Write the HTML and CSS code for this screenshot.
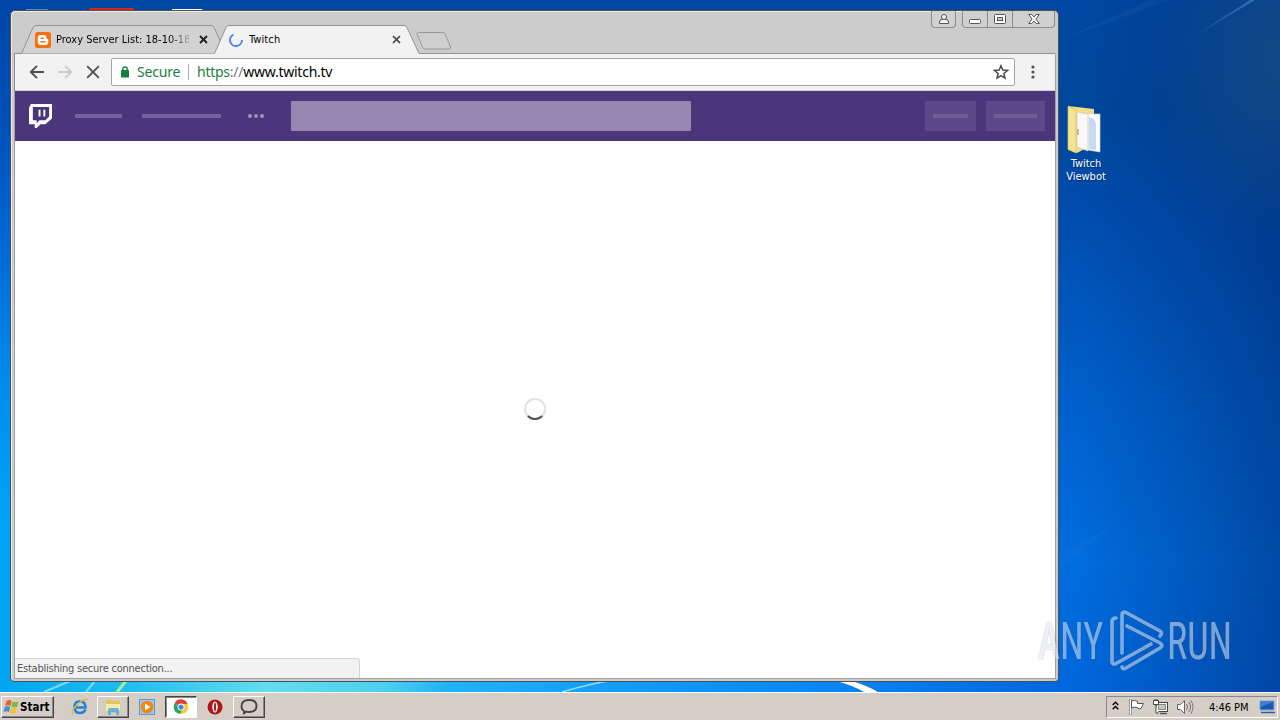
FILE: index.html
```html
<!DOCTYPE html>
<html lang="en">
<head>
  <meta charset="UTF-8">
  <meta name="viewport" content="width=device-width, initial-scale=1.0">
  <title>Desktop</title>
  <link rel="stylesheet" href="styles.css">
</head>
<body>
  <div class="desktop">
    <!-- wallpaper -->
    <svg class="wallpaper" width="1280" height="692" viewBox="0 0 1280 692">
      <defs>
        <linearGradient id="ray" x1="0" y1="1" x2="1" y2="0">
          <stop offset="0" stop-color="#4f9be0" stop-opacity="0"/>
          <stop offset="1" stop-color="#4f9be0" stop-opacity=".5"/>
        </linearGradient>
        <linearGradient id="side" x1="0" y1="0" x2="0" y2="1">
          <stop offset="0" stop-color="#0045a6"/>
          <stop offset=".18" stop-color="#0050b8"/>
          <stop offset=".35" stop-color="#0068d4"/>
          <stop offset=".55" stop-color="#008cec"/>
          <stop offset=".75" stop-color="#00a3f8"/>
          <stop offset="1" stop-color="#00a5f2"/>
        </linearGradient>
        <linearGradient id="strip">
          <stop offset="0" stop-color="#00a5f2"/>
          <stop offset=".12" stop-color="#20bdf0"/>
          <stop offset=".25" stop-color="#63dced"/>
          <stop offset=".36" stop-color="#4fd0f0"/>
          <stop offset=".42" stop-color="#22b4f8"/>
          <stop offset=".55" stop-color="#169ffb"/>
          <stop offset=".75" stop-color="#088af5"/>
          <stop offset="1" stop-color="#0066dc"/>
        </linearGradient>
      </defs>
      <rect x="0" y="0" width="30" height="692" fill="url(#side)"/>
      <rect x="0" y="681" width="1060" height="11" fill="url(#strip)"/>
      <path d="M1180 45L1250 0h5z" fill="url(#ray)"/>
      <path d="M1060 40L1150 0h20z" fill="#4f9be0" opacity=".08"/>
      <path d="M1060 555L1120 520 1060 570z" fill="#4f9be0" opacity=".05"/>
      <path d="M44 692L70 681M86 692L95 681" stroke="#9be4f5" stroke-width="2" opacity=".8"/>
      <path d="M117 692L126 681" stroke="#a5f0a0" stroke-width="3"/>
      <path d="M562 692Q590 684 608 681" stroke="#8fdcff" stroke-width="1.500" fill="none"/>
      <path d="M836 681h16q16 5 26 11h-14q-12-7-28-11z" fill="#fff"/>
      <path d="M26 9h22v2H26z" fill="#7aa6d8" opacity=".7"/>
      <path d="M89 9q0-1 2-1h42q1 0 1 1v4H89z" fill="#d8281c"/>
      <path d="M172 9h30l2 3h-32z" fill="#fff"/>
    </svg>

    <div class="shortcut">
      <svg width="40" height="50" viewBox="0 0 40 50">
        <path d="M2 1L28 4v35L11 48 2 45z" fill="#f1df85"/>
        <path d="M22 9h12v38l-12-2z" fill="#fff" stroke="#d9dee4" stroke-width=".6"/>
        <path d="M23 12l5 2 2 4v27l-7-1z" fill="#c6dbf0"/>
        <path d="M11 7l11 2v37l-11-4z" fill="#f8f8f8" stroke="#c9c9c2" stroke-width=".7"/>
        <path d="M2 1l8 4v43l-8-4z" fill="#f4e596" stroke="#d5bd56" stroke-width=".7"/>
        <path d="M12 24v6" stroke="#8d8254"/>
      </svg>
      <span>Twitch<br>Viewbot</span>
    </div>

    <div class="window">
      <div class="titlebar">
        <div class="tabs">
          <div class="tab">
            <svg class="shape" width="206" height="29" viewBox="0 0 206 29">
              <path d="M.5 28.500L12 2.500q1-2 3-2H190q2 0 3 2L205 28.500" fill="#d2d2d2" stroke="#929292"/>
            </svg>
            <svg class="favicon" width="16" height="16" viewBox="0 0 16 16">
              <rect width="16" height="16" rx="2.500" fill="#f8700b"/>
              <path d="M6 3h2.500q3 0 3 3 0 1 1 1 .8 0 .8 1V10q0 3-3.300 3H6q-3.300 0-3.300-3V6Q2.700 3 6 3z" fill="#fff"/>
              <path d="M6 6.200h2.300M6 9.800h4" stroke="#f8700b" stroke-width="1.400" stroke-linecap="round"/>
            </svg>
            <span class="title faded">Proxy Server List: 18-10-18</span>
            <svg class="close" width="9" height="9" viewBox="0 0 9 9"><path d="M1 1l7 7M8 1L1 8" stroke="#222" stroke-width="1.900"/></svg>
          </div>
          <div class="tab active">
            <svg class="shape" width="206" height="29" viewBox="0 0 206 29">
              <path d="M.5 28.500L12 2.500q1-2 3-2H190q2 0 3 2L205 28.500V29H.500z" fill="#f2f2f2"/>
              <path d="M.5 28.500L12 2.500q1-2 3-2H190q2 0 3 2L205 28.500" fill="none" stroke="#929292"/>
            </svg>
            <svg class="favicon" width="16" height="16" viewBox="0 0 16 16">
              <path d="M5.500 2.600A6 6 0 1 0 14 8" fill="none" stroke="#5484e8" stroke-width="2"/>
            </svg>
            <span class="title">Twitch</span>
            <svg class="close" width="9" height="9" viewBox="0 0 9 9"><path d="M1 1l7 7M8 1L1 8" stroke="#444" stroke-width="1.700"/></svg>
          </div>
          <svg class="newtab" width="36" height="18" viewBox="0 0 36 18">
            <path d="M2.500.5H27q1.500 0 2.200 1.500l5.300 13q.5 2-1.500 2H9q-1.500 0-2.200-1.500L1 2.500Q.5.500 2.500.5z" fill="#cfcfcf" stroke="#989898"/>
          </svg>
        </div>
        <div class="controls">
          <span class="ctl user">
            <svg width="12" height="12" viewBox="0 0 12 12" fill="#f4f4f4" stroke="#555"><path d="M1.500 10.500V9q0-2.500 2.500-2.500h4q2.500 0 2.500 2.500v1.500z"/><circle cx="6" cy="4" r="2.500"/></svg>
          </span>
          <span class="ctl min">
            <svg width="14" height="14" viewBox="0 0 14 14"><rect x="1.500" y="7.500" width="11" height="4" rx="1" fill="#fff" stroke="#555"/></svg>
          </span>
          <span class="ctl max">
            <svg width="12" height="12" viewBox="0 0 12 12" fill="#fff" stroke="#555"><rect x=".5" y="1.500" width="11" height="9" rx="1"/><rect x="3.500" y="4.500" width="5" height="3" fill="#ccc"/></svg>
          </span>
          <span class="ctl shut">
            <svg width="12" height="12" viewBox="0 0 12 12"><path d="M.7 1.500h3L6 4l2.300-2.500h3L7.800 6l3.500 4.500h-3L6 8l-2.300 2.500h-3L4.200 6z" fill="#fff" stroke="#555"/></svg>
          </span>
        </div>
      </div>

      <div class="toolbar">
        <svg class="back" width="16" height="14" viewBox="0 0 16 14" fill="none" stroke="#505050" stroke-width="1.900"><path d="M15 7H2M8 .8L1.800 7 8 13.200"/></svg>
        <svg class="forward" width="16" height="14" viewBox="0 0 16 14" fill="none" stroke="#ccc" stroke-width="1.900"><path d="M1 7h13M8 .8L14.200 7 8 13.200"/></svg>
        <svg class="stop" width="14" height="14" viewBox="0 0 14 14" fill="none" stroke="#505050" stroke-width="1.900"><path d="M1.200 1.200l11.600 11.600M12.800 1.200L1.200 12.800"/></svg>
        <div class="omnibox">
          <svg width="10" height="12" viewBox="0 0 10 12"><rect x="1" y="4" width="8" height="7.500" rx=".5" fill="#14803c"/><path d="M2.800 5V3q0-2 2.200-2t2.200 2v2" fill="none" stroke="#14803c" stroke-width="1.400"/></svg>
          <span class="secure">Secure</span>
          <span class="divider"></span>
          <span class="url"><span class="scheme">https</span><span class="slashes">://</span>www.twitch.tv</span>
          <svg class="star" width="16" height="16" viewBox="0 0 16 16"><path d="M8 1.800l1.800 4.300 4.700.4-3.600 3 1.100 4.600L8 11.700l-4 2.400 1.100-4.600-3.600-3 4.700-.4z" fill="none" stroke="#4b4b4b" stroke-width="1.500"/></svg>
        </div>
        <svg class="menu" width="4" height="14" viewBox="0 0 4 14" fill="#505050"><circle cx="2" cy="2" r="1.600"/><circle cx="2" cy="7" r="1.600"/><circle cx="2" cy="12" r="1.600"/></svg>
      </div>

      <div class="page">
        <div class="nav">
          <svg class="logo" width="23" height="24" viewBox="0 0 24 25">
            <path fill-rule="evenodd" d="M2 0H24V15L17 21H12L8 25H6V21H0V4zM4 3V17H8V20L11 17H17L21 13V3zM10 6h2v7h-2zM15 6h2v7h-2z" fill="#fff"/>
          </svg>
          <span class="line short"></span>
          <span class="line long"></span>
          <span class="dots"><i></i><i></i><i></i></span>
          <span class="search"></span>
          <span class="button login"><span class="line"></span></span>
          <span class="button signup"><span class="line"></span></span>
        </div>
        <div class="content">
          <svg class="spinner" width="22" height="22" viewBox="0 0 22 22" fill="none">
            <circle cx="11" cy="11" r="10" stroke="#e2e2e2" stroke-width="2"/>
            <path d="M3.900 18.100A10 10 0 0 0 18.100 18.100" stroke="#555" stroke-width="2.200"/>
          </svg>
        </div>
        <div class="status">Establishing secure connection...</div>
      </div>
    </div>

    <svg class="watermark" width="244" height="66" viewBox="0 0 244 66">
      <text transform="translate(2 51) scale(.75 1)">ANY</text>
      <g fill="none" stroke-width="3.600" stroke-linejoin="round" stroke-linecap="round">
        <path d="M80 10q-4 0-4 4V54q0 3 4 1.500L115 36"/>
        <path d="M86 45V7q0-4 4-2.500L124 23q3 2 0 5"/>
        <path d="M91 18L124 35q4 2.500 0 5L90 60q-3 2-4-1"/>
      </g>
      <text transform="translate(131 51) scale(.745 1)">RUN</text>
    </svg>
  </div>

  <div class="taskbar">
    <div class="start">
      <svg width="17" height="16" viewBox="0 0 16 16">
        <path d="M3 2q3-2 5 0L7 7Q4 5.500 1.500 7z" fill="#e8602c"/>
        <path d="M9 2.500q3 1.500 6 0L13.500 8Q11 9 8 7.500z" fill="#7fb83c"/>
        <path d="M1.300 8Q4 6.500 6.700 8L5.500 13Q3 11.500 0 13z" fill="#3f8fd8"/>
        <path d="M7.700 8.500q3 1.500 5.600.5L12 14q-3 1.500-5.500-.5z" fill="#f5c22e"/>
      </svg>
      <b>Start</b>
    </div>
    <div class="apps">
      <span class="app ie">
        <svg width="18" height="18" viewBox="0 0 18 18" fill="none"><path d="M14.500 11.500Q13 15 9 15q-5.500 0-5.500-6T9 3.500q5.500 0 5.500 6H5" stroke="#2583d8" stroke-width="2.600"/><path d="M2 16Q-1 13 7 6T17 2.500" stroke="#e9b630" stroke-width="1.500"/></svg>
      </span>
      <span class="app raised">
        <svg width="18" height="18" viewBox="0 0 18 18"><path d="M2 3q0-1 1-1h4l1 1h7q1 0 1 1v11H2z" fill="#e3c35c"/><path d="M2 6h14v7H2z" fill="#faeba6"/><path d="M4 17v-5q0-2 2-2h7q2 0 2 2v5h-3v-3H7v3z" fill="#62b3e4"/></svg>
      </span>
      <span class="app">
        <svg width="16" height="16" viewBox="0 0 16 16"><rect x=".5" y=".5" width="15" height="15" fill="#9bc9ec" stroke="#5c98cb"/><circle cx="8" cy="8" r="6.300" fill="#f58413"/><path d="M6 4.500L11.500 8 6 11.500z" fill="#fff"/></svg>
      </span>
      <span class="app pressed">
        <svg width="16" height="16" viewBox="0 0 16 16"><path d="M8 8L1.500 4.300A7 7 0 0 1 14.500 5H8z" fill="#df4435"/><path d="M8 8V5h6.500A7 7 0 0 1 7.500 15z" fill="#fbc829"/><path d="M8 8l1 3-2 4A7 7 0 0 1 1.700 4.400z" fill="#27a45a"/><circle cx="8" cy="8" r="3.500" fill="#fff"/><circle cx="8" cy="8" r="2.600" fill="#4285f4"/></svg>
      </span>
      <span class="app">
        <svg width="16" height="16" viewBox="0 0 16 16"><circle cx="8" cy="8" r="7.500" fill="#b41419"/><ellipse cx="8" cy="8" rx="2.700" ry="5.500" fill="#fff"/><ellipse cx="8" cy="8" rx="1" ry="4.600" fill="#b41419"/></svg>
      </span>
      <span class="app raised">
        <svg width="18" height="18" viewBox="0 0 18 18"><path d="M4.500 13.500Q1.500 11.500 1.500 8.200 1.500 2 9 2t7.500 6-7.500 6q-2 0-3-.3L3.500 16z" fill="none" stroke="#444" stroke-width="1.800"/></svg>
      </span>
    </div>
    <div class="tray">
      <svg class="chevron" width="7" height="9" viewBox="0 0 7 9" fill="none" stroke="#000" stroke-width="1.400"><path d="M.7 4l2.800-2.800L6.300 4M.7 8.200l2.800-2.800 2.800 2.800"/></svg>
      <svg class="flag" width="17" height="16" viewBox="0 0 17 16"><path d="M1.500 0v16h2V0z" fill="#fff" stroke="#777" stroke-width=".7"/><path d="M3.500 2q3-1.500 6 .5v2h6L13 9.500q-2 1-4-1Q6 7.500 3.500 9z" fill="#fff" stroke="#555"/></svg>
      <svg class="network" width="17" height="16" viewBox="0 0 17 16"><rect x="4.500" y="3.500" width="11" height="9" fill="#fff" stroke="#444"/><rect x="6.500" y="5.500" width="7" height="5" fill="#c4c4c4" stroke="#888"/><path d="M8 14.500h7" stroke="#555" stroke-width="1.500"/><path d="M1.500 1.500h5v4h-5zM3 0v2M5 0v2M4 6v8h3" fill="#fff" stroke="#444"/></svg>
      <svg class="volume" width="18" height="16" viewBox="0 0 18 16"><path d="M1.500 5.500h3l4-4v13l-4-4h-3z" fill="#fff" stroke="#666"/><path d="M10.500 5q2 3 0 6M12.800 3q3.500 5 0 10M15 1.500q4 6.500 0 13" fill="none" stroke="#777"/></svg>
      <span class="clock">4:46 PM</span>
      <svg class="show" width="17" height="14" viewBox="0 0 17 14"><path d="M1 1h14v9H1z" fill="#1b58b4" stroke="#7fa7d8"/><path d="M2 2h12L2 7z" fill="#3d7dd5"/><path d="M2 12.500h14" stroke="#355b91" stroke-width="1.500"/></svg>
    </div>
  </div>
</body>
</html>
```
FILE: styles.css
```css
*{
  box-sizing: border-box;
}
body{
  margin: 0;
  width: 1280px;
  height: 720px;
  overflow: hidden;
  display: flex;
  flex-direction: column;
  font-family: "DejaVu Sans Condensed", "DejaVu Sans", sans-serif;
  font-stretch: condensed;
  font-size: 11px;
  color: #000;
}
svg{
  display: block;
  flex: none;
}

/* desktop */
.desktop{
  position: relative;
  height: 692px;
  background:
    radial-gradient(ellipse 130px 190px at 1280px 60px, rgba(30,85,135,.6), transparent),
    linear-gradient(90deg, transparent 1080px, rgba(0,40,110,.5) 1280px),
    linear-gradient(180deg, #0048a2 0, #00479b 110px, #004cac 200px, #0060cb 400px, #006ddd 560px, #0066dc 692px);
}
.wallpaper{
  position: absolute;
  left: 0;
  top: 0;
}
.shortcut{
  position: absolute;
  left: 1051px;
  top: 105px;
  width: 70px;
  display: flex;
  flex-direction: column;
  align-items: center;
  color: #fff;
  line-height: 13px;
  text-align: center;
  text-shadow: 1px 1px 1px #002a66;
}
.shortcut span{
  margin-top: 2px;
}

/* browser window */
.window{
  position: absolute;
  left: 10px;
  top: 10px;
  width: 1049px;
  height: 672px;
  padding: 0 3px 3px 4px;
  display: flex;
  flex-direction: column;
  background: #ccc;
  border: 1px solid #4b5055;
  border-radius: 5px 5px 4px 4px;
  box-shadow: inset 1px 1px 0 #ececec;
}
.titlebar{
  height: 43px;
  display: flex;
  justify-content: space-between;
  margin-left: -1px;
  border-bottom: 1px solid #929292;
}
.tabs{
  display: flex;
  padding: 14px 0 0 7px;
}
.tab{
  position: relative;
  width: 206px;
  height: 29px;
  margin-right: -13px;
  padding: 0 11px 0 14px;
  display: flex;
  align-items: center;
}
.tab.active{
  z-index: 1;
}
.shape{
  position: absolute;
  left: 0;
  top: 0;
}
.favicon, .title, .tab .close{
  position: relative;
}
.title{
  width: 137px;
  margin-left: 5px;
  margin-right: 6px;
  letter-spacing: .1px;
  white-space: nowrap;
  overflow: hidden;
}
.faded{
  width: 133px;
  margin-right: 10px;
  letter-spacing: 0;
  -webkit-mask-image: linear-gradient(90deg, #000 112px, transparent 138px);
}
.newtab{
  margin: 7px 0 0 9px;
}
.controls{
  display: flex;
  height: 17px;
}
.ctl{
  height: 17px;
  display: flex;
  align-items: center;
  justify-content: center;
  border: 1px solid #8b8b8b;
  border-top: 0;
  background: #d0d0d0;
}
.user{
  width: 25px;
  margin-right: 6px;
  border-radius: 0 0 4px 4px;
}
.min{
  width: 26px;
  border-radius: 0 0 0 4px;
}
.max{
  width: 25px;
  border-left: 0;
}
.shut{
  width: 42px;
  border-left: 0;
  border-radius: 0 0 4px 0;
}

/* toolbar */
.toolbar{
  height: 37px;
  display: flex;
  align-items: center;
  background: #f2f2f2;
  padding-left: 14px;
  border-bottom: 1px solid #d2cfd8;
  box-shadow: -1px 0 0 #929292, 1px 0 0 #a0a0a0;
}
.forward{
  margin-left: 12px;
}
.stop{
  margin-left: 13px;
}
.omnibox{
  width: 904px;
  height: 28px;
  margin-left: 11px;
  padding: 0 5px 0 8px;
  display: flex;
  align-items: center;
  background: #fff;
  border: 1px solid #a5a5a0;
  border-radius: 2px;
  font-family: "Noto Sans", "DejaVu Sans", sans-serif;
  font-size: 14px;
  line-height: 20px;
}
.secure, .url{
  margin-top: -1px;
}
.url{
  letter-spacing: -.25px;
}
.secure{
  width: 44px;
  margin-left: 7px;
  color: #178040;
  letter-spacing: -.2px;
}
.divider{
  width: 1px;
  height: 16px;
  margin: 0 8px 0 7px;
  background: #aaa;
}
.scheme{
  color: #178040;
}
.slashes{
  color: #777;
}
.star{
  margin-left: auto;
}
.menu{
  margin-left: 16px;
}

/* page */
.page{
  position: relative;
  flex: 1;
  display: flex;
  flex-direction: column;
  background: #fff;
  box-shadow: 0 0 0 1px #a0a0a0;
  clip-path: inset(0 -1px -1px -1px);
}
.nav{
  height: 50px;
  display: flex;
  align-items: center;
  padding: 0 10px 0 14px;
  background: #4b367c;
}
.line{
  height: 4px;
  background: #775f9f;
}
.short{
  width: 47px;
  margin-left: 23px;
}
.long{
  width: 79px;
  margin-left: 20px;
}
.dots{
  display: flex;
  gap: 2px;
  margin-left: 27px;
}
.dots i{
  width: 4px;
  height: 4px;
  border-radius: 50%;
  background: #a18fc0;
}
.search{
  width: 400px;
  height: 30px;
  margin-left: 27px;
  background: #9786b2;
  border-radius: 1px;
}
.button{
  height: 30px;
  display: flex;
  align-items: center;
  padding: 0 8px;
  background: #5d4889;
}
.button .line{
  flex: 1;
  height: 4px;
  background: #725d9a;
}
.login{
  width: 51px;
  margin-left: auto;
}
.signup{
  width: 59px;
  margin-left: 10px;
}
.content{
  flex: 1;
  display: flex;
  align-items: center;
  justify-content: center;
  padding-bottom: 2px;
}
.status{
  position: absolute;
  left: 0;
  bottom: 0;
  width: 345px;
  height: 20px;
  padding-left: 2px;
  line-height: 19px;
  letter-spacing: -.23px;
  color: #555;
  background: #f2f2f2;
  border: 1px solid #d5d5d5;
  border-width: 1px 1px 0 0;
  border-radius: 0 4px 0 0;
}

.watermark{
  position: absolute;
  left: 1036px;
  top: 608px;
  opacity: .55;
  filter: drop-shadow(0 0 1px rgba(80,80,80,.6));
}
.watermark text{
  font-family: Roboto, sans-serif;
  font-size: 51px;
  font-weight: 400;
  fill: #dfe7f2;
}
.watermark g{
  stroke: #dfe7f2;
}

/* taskbar */
.taskbar{
  height: 28px;
  display: flex;
  align-items: flex-start;
  padding: 3px 2px 0 1px;
  background: #d5cec7;
  border-top: 1px solid #fff;
}
.start{
  width: 53px;
  height: 22px;
  display: flex;
  align-items: center;
  padding-left: 1px;
  background: #d5cec7;
  border: 1px solid #fff;
  border-right-color: #444;
  border-bottom-color: #444;
  box-shadow: inset -1px -1px 0 #888;
  font-size: 11.5px;
}
.apps{
  display: flex;
  margin-left: 9px;
}
.app{
  width: 34px;
  height: 22px;
  display: flex;
  align-items: center;
  justify-content: center;
}
.app:not(.raised):not(.pressed):not(.ie){
  padding-right: 2px;
}
.raised, .pressed{
  width: 32px;
  margin-right: 2px;
  border: 1px solid #fff;
  border-right-color: #444;
  border-bottom-color: #444;
  box-shadow: inset -1px -1px 0 #888;
}
.pressed{
  background: #fff;
  border-color: #444 #fff #fff #444;
  box-shadow: inset 1px 1px 0 #888;
}
.tray{
  width: 172px;
  height: 22px;
  margin-left: auto;
  display: flex;
  align-items: center;
  border: 1px solid #fff;
  border-top-color: #888;
  border-left-color: #888;
  padding-left: 5px;
}
.chevron{
  margin-bottom: 3px;
}
.flag{
  margin-left: 9px;
}
.network{
  margin-left: 7px;
}
.volume{
  margin-left: 7px;
}
.clock{
  width: 40px;
  margin-left: 15px;
  letter-spacing: -.05px;
  white-space: nowrap;
}
.show{
  margin-left: 10px;
}
```
